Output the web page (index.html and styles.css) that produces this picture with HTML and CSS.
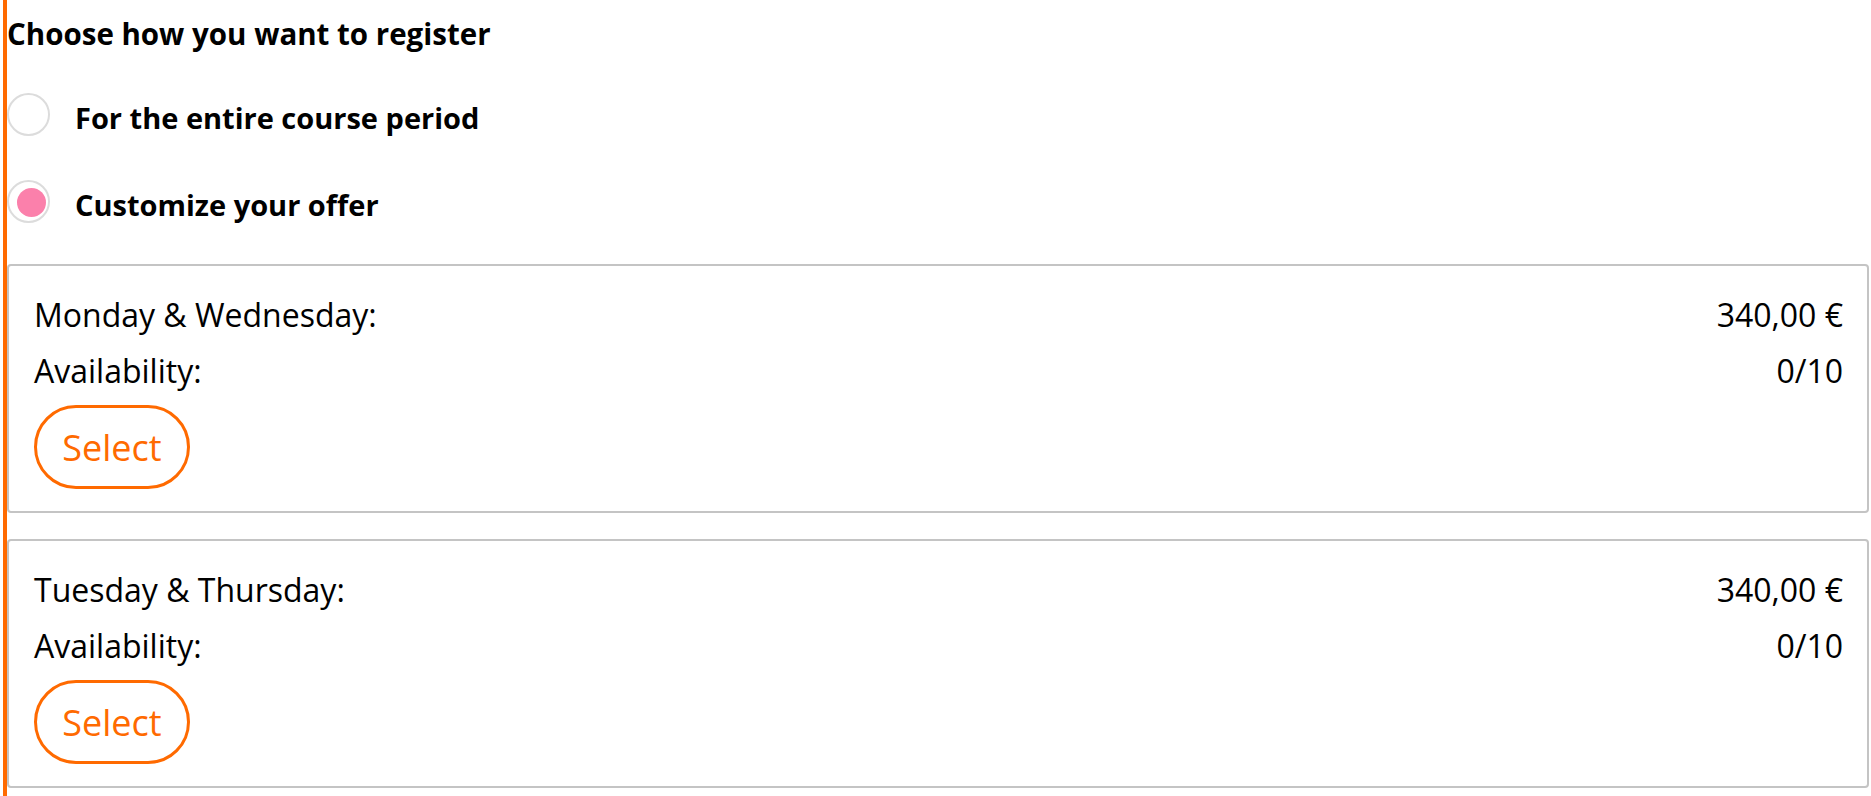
FILE: index.html
```html
<!DOCTYPE html>
<html lang="en">
<head>
<meta charset="utf-8">
<title>Register</title>
<link rel="stylesheet" href="styles.css">
</head>
<body>
<div class="page">
  <h2 class="title">Choose how you want to register</h2>
  <div class="options">
    <label class="option">
      <span class="radio"></span>
      <span class="option-label">For the entire course period</span>
    </label>
    <label class="option">
      <span class="radio checked"></span>
      <span class="option-label">Customize your offer</span>
    </label>
  </div>
  <div class="cards">
    <div class="card">
      <div class="row"><span>Monday &amp; Wednesday:</span><span>340,00 €</span></div>
      <div class="row"><span>Availability:</span><span>0/10</span></div>
      <button class="select-btn" type="button">Select</button>
    </div>
    <div class="card">
      <div class="row"><span>Tuesday &amp; Thursday:</span><span>340,00 €</span></div>
      <div class="row"><span>Availability:</span><span>0/10</span></div>
      <button class="select-btn" type="button">Select</button>
    </div>
  </div>
</div>
</body>
</html>
```

FILE: styles.css
```css
html, body {
  margin: 0;
  padding: 0;
  background: #fff;
}

body {
  font-family: "Open Sans", "Noto Sans", sans-serif;
  color: #000;
  overflow: hidden;
}

.page {
  margin-left: 3px;
  border-left: 4px solid #ff6a00;
  min-height: 796px;
  padding-right: 2px;
  box-sizing: border-box;
}

.title {
  margin: 0;
  padding-top: 14px;
  font-size: 29.5px;
  line-height: 40px;
  font-weight: 700;
}

.options {
  display: flex;
  flex-direction: column;
  gap: 44px;
  margin-top: 39px;
}

.option {
  display: flex;
  align-items: center;
  gap: 25px;
  height: 43px;
}

.radio {
  position: relative;
  width: 43px;
  height: 43px;
  box-sizing: border-box;
  border: 2px solid #dcdcdc;
  border-radius: 50%;
  flex: none;
}

.radio.checked::after {
  content: "";
  position: absolute;
  left: 8px;
  top: 6px;
  width: 29px;
  height: 29px;
  border-radius: 50%;
  background: #fb80ab;
}

.option-label {
  font-size: 29px;
  font-weight: 700;
  line-height: 40px;
  padding-top: 7px;
}

.cards {
  display: flex;
  flex-direction: column;
  gap: 26px;
  margin-top: 41px;
}

.card {
  border: 2px solid #c4c4c4;
  border-radius: 4px;
  padding: 21px 24px 22px 25px;
  display: flex;
  flex-direction: column;
  align-items: flex-start;
}

.row {
  align-self: stretch;
  display: flex;
  justify-content: space-between;
  font-size: 32px;
  line-height: 56px;
}

.select-btn {
  margin-top: 6px;
  width: 156px;
  height: 84px;
  border: 3px solid #ff6a00;
  border-radius: 42px;
  background: #fff;
  color: #ff6a00;
  font-family: inherit;
  font-size: 36px;
  padding: 0;
}
```
